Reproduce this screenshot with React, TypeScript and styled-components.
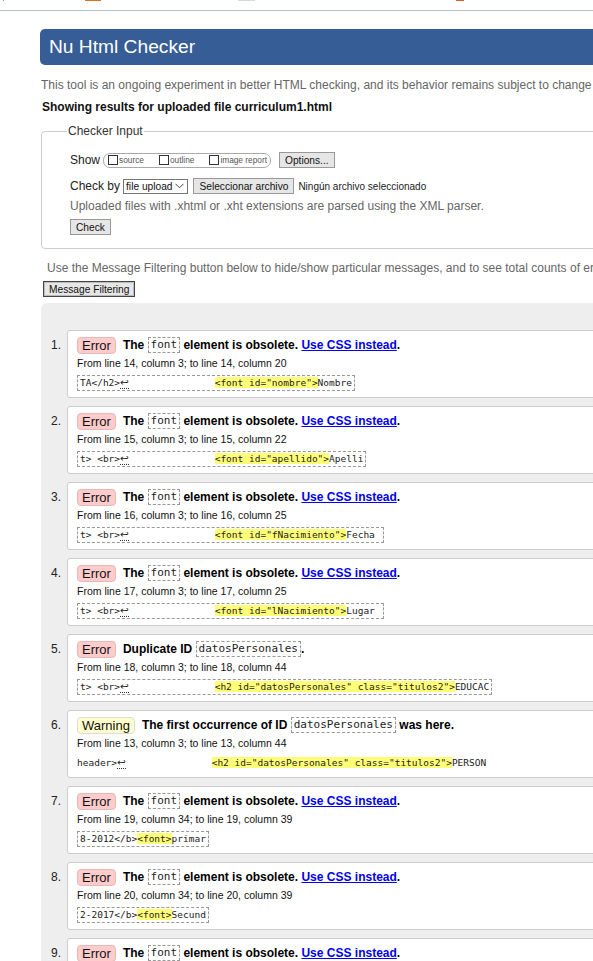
import React from "react";
import styled, { createGlobalStyle } from "styled-components";

const Global = createGlobalStyle`
  html, body { margin: 0; padding: 0; overflow: hidden; background: #fff; }
  body { font-family: "Liberation Sans", Arial, sans-serif; color: #000; }
`;

const Page = styled.div`
  width: 900px;
`;

const TopStrip = styled.div`
  height: 10px;
  border-bottom: 1px solid #b3c1cc;
  display: flex;
  align-items: flex-start;
`;

const StripBit = styled.span<{ $ml: number; $w: number; $c: string }>`
  display: block;
  margin-left: ${(p) => p.$ml}px;
  width: ${(p) => p.$w}px;
  height: 1px;
  background: ${(p) => p.$c};
`;

const Main = styled.div`
  padding-left: 40px;
`;

const Title = styled.h1`
  margin: 18px 0 0 0;
  height: 36px;
  line-height: 36px;
  background: #365d95;
  border-radius: 5px 0 0 5px;
  color: #fff;
  font-weight: normal;
  font-size: 19.2px;
  padding-left: 9px;
`;

const Intro = styled.p`
  margin: 13px 0 0 1px;
  font-size: 12px;
  line-height: 15px;
  color: #666;
  white-space: nowrap;
`;

const Showing = styled.p`
  margin: 7px 0 0 2px;
  font-size: 12px;
  line-height: 15px;
  font-weight: bold;
  color: #111;
`;

const Fieldset = styled.fieldset`
  margin: 9px 0 0 1px;
  border: 1px solid #ccc;
  border-radius: 4px;
  padding: 0 0 13px 28px;
`;

const Legend = styled.legend`
  font-size: 12px;
  line-height: 15px;
  color: #333;
  padding: 0 1px;
  margin-left: -3px;
`;

const Row = styled.div<{ $mt: number }>`
  display: flex;
  align-items: center;
  height: 16px;
  margin-top: ${(p) => p.$mt}px;
`;

const Label = styled.span`
  font-size: 12px;
  color: #222;
  margin-right: 3px;
`;

const Pill = styled.span`
  display: inline-flex;
  align-items: center;
  height: 13px;
  border: 1px solid #aaa;
  border-radius: 7px;
  padding: 0 3px 0 4px;
  margin-right: 8px;
`;

const Box = styled.span`
  display: inline-block;
  width: 8px;
  height: 8px;
  border: 1px solid #333;
  background: #fff;
  margin-right: 1px;
`;

const TinyLabel = styled.span<{ $mr: number }>`
  font-size: 8.3px;
  color: #555;
  margin-right: ${(p) => p.$mr}px;
`;

const Button = styled.span<{ $ml?: number; $strong?: boolean }>`
  display: inline-flex;
  align-items: center;
  box-sizing: border-box;
  height: 16px;
  padding: 0 5px;
  margin-left: ${(p) => p.$ml ?? 0}px;
  background: #e6e6e6;
  border: 1px solid ${(p) => (p.$strong ? "#444" : "#999")};
  box-shadow: ${(p) => (p.$strong ? "inset 0 0 0 1px #bbb" : "none")};
  font-size: 10.2px;
  color: #111;
  white-space: nowrap;
`;

const Select = styled.span`
  display: inline-flex;
  align-items: center;
  box-sizing: border-box;
  height: 15px;
  padding: 0 3px 0 2px;
  border: 1px solid #767676;
  background: #fff;
  font-size: 10.2px;
  color: #111;
  gap: 3px;
`;

const Hint = styled.span`
  font-size: 10px;
  color: #222;
  margin-left: 4px;
`;

const Note = styled.p<{ $ml?: number; $mt: number }>`
  margin: ${(p) => p.$mt}px 0 0 ${(p) => p.$ml ?? 0}px;
  font-size: 12px;
  line-height: 15px;
  color: #666;
  white-space: nowrap;
`;

const FilterRow = styled.div`
  margin: 5px 0 0 3px;
  display: flex;
`;

const Results = styled.div`
  margin: 6px 0 0 1px;
  background: #eee;
  border-top-left-radius: 6px;
  padding: 27px 0 40px 0;
`;

const List = styled.ol`
  list-style: none;
  margin: 0;
  padding: 0;
  display: flex;
  flex-direction: column;
  gap: 8px;
`;

const Entry = styled.li`
  display: flex;
`;

const Num = styled.span`
  width: 26px;
  box-sizing: border-box;
  padding: 8px 6px 0 0;
  text-align: right;
  font-size: 12px;
  line-height: 15px;
  color: #222;
`;

const Card = styled.div`
  flex: 1;
  box-sizing: border-box;
  height: 68px;
  background: #fff;
  border: 1px solid #ccc;
  border-radius: 3px;
  padding: 6px 0 6px 9px;
`;

const MsgLine = styled.div`
  display: flex;
  align-items: center;
  height: 16px;
  font-size: 12px;
  font-weight: bold;
  white-space: pre;
`;

const Badge = styled.span<{ $kind: "error" | "warning" }>`
  display: inline-flex;
  align-items: center;
  box-sizing: border-box;
  height: 17px;
  padding: 0 4px;
  margin-right: 7px;
  border-radius: 4px;
  font-size: 13px;
  font-weight: normal;
  color: #111;
  background: ${(p) => (p.$kind === "error" ? "#fcc" : "#ffc")};
  border: 1px solid ${(p) => (p.$kind === "error" ? "#e8b8b8" : "#ddd")};
`;

const Code = styled.code`
  display: inline-block;
  font-family: "DejaVu Sans Mono", "Liberation Mono", monospace;
  font-size: 11px;
  font-weight: normal;
  line-height: 14px;
  padding: 0 2px;
  border: 1px dashed #999;
  color: #222;
`;

const Link = styled.a`
  color: #00e;
  text-decoration: underline;
`;

const From = styled.div`
  margin-top: 4px;
  font-size: 10.5px;
  line-height: 13px;
  color: #111;
`;

const Extract = styled.div<{ $boxed: boolean }>`
  display: inline-block;
  margin-top: 5px;
  box-sizing: border-box;
  height: 16px;
  padding: 0 ${(p) => (p.$boxed ? 2 : 0)}px;
  border: 1px dashed ${(p) => (p.$boxed ? "#999" : "transparent")};
  margin-left: ${(p) => (p.$boxed ? 0 : -1)}px;
  font-family: "DejaVu Sans Mono", "Liberation Mono", monospace;
  font-size: 9.5px;
  line-height: 14px;
  white-space: pre;
  color: #222;
`;

const Lf = styled.span`
  display: inline-block;
  font-family: "DejaVu Sans", sans-serif;
  font-size: 10.5px;
  line-height: 11px;
  border-bottom: 1px dotted #333;
`;

const Hl = styled.span`
  background: #ff7;
`;

type Item = {
  kind: "error" | "warning";
  msg: React.ReactNode;
  from: string;
  pre: string;
  lf: boolean;
  hl: string;
  post: string;
  boxed: boolean;
};

const gap = " ".repeat(15);

const obsolete = (
  <>
    The <Code>font</Code> element is obsolete. <Link href="#">Use CSS instead</Link>.
  </>
);

const items: Item[] = [
  { kind: "error", msg: obsolete, from: "From line 14, column 3; to line 14, column 20", pre: "TA</h2>", lf: true, hl: '<font id="nombre">', post: "Nombre", boxed: true },
  { kind: "error", msg: obsolete, from: "From line 15, column 3; to line 15, column 22", pre: "t> <br>", lf: true, hl: '<font id="apellido">', post: "Apelli", boxed: true },
  { kind: "error", msg: obsolete, from: "From line 16, column 3; to line 16, column 25", pre: "t> <br>", lf: true, hl: '<font id="fNacimiento">', post: "Fecha ", boxed: true },
  { kind: "error", msg: obsolete, from: "From line 17, column 3; to line 17, column 25", pre: "t> <br>", lf: true, hl: '<font id="lNacimiento">', post: "Lugar ", boxed: true },
  {
    kind: "error",
    msg: (
      <>
        Duplicate ID <Code>datosPersonales</Code>.
      </>
    ),
    from: "From line 18, column 3; to line 18, column 44",
    pre: "t> <br>",
    lf: true,
    hl: '<h2 id="datosPersonales" class="titulos2">',
    post: "EDUCAC",
    boxed: true,
  },
  {
    kind: "warning",
    msg: (
      <>
        The first occurrence of ID <Code>datosPersonales</Code> was here.
      </>
    ),
    from: "From line 13, column 3; to line 13, column 44",
    pre: "header>",
    lf: true,
    hl: '<h2 id="datosPersonales" class="titulos2">',
    post: "PERSON",
    boxed: false,
  },
  { kind: "error", msg: obsolete, from: "From line 19, column 34; to line 19, column 39", pre: "8-2012</b>", lf: false, hl: "<font>", post: "primar", boxed: true },
  { kind: "error", msg: obsolete, from: "From line 20, column 34; to line 20, column 39", pre: "2-2017</b>", lf: false, hl: "<font>", post: "Secund", boxed: true },
  { kind: "error", msg: obsolete, from: "From line 21, column 34; to line 21, column 39", pre: "1-2020</b>", lf: false, hl: "<font>", post: "Grado ", boxed: true },
];

export default function App() {
  return (
    <Page>
      <Global />
      <TopStrip>
        <StripBit $ml={3} $w={1} $c="#999" />
        <StripBit $ml={81} $w={16} $c="#e0701f" />
        <StripBit $ml={137} $w={17} $c="#d8d8d8" />
        <StripBit $ml={201} $w={8} $c="#e05a28" />
      </TopStrip>
      <Main>
        <Title>Nu Html Checker</Title>
        <Intro>
          This tool is an ongoing experiment in better HTML checking, and its behavior remains subject to change
        </Intro>
        <Showing>Showing results for uploaded file curriculum1.html</Showing>
        <Fieldset>
          <Legend>Checker Input</Legend>
          <Row $mt={13}>
            <Label>Show</Label>
            <Pill>
              <Box />
              <TinyLabel $mr={15}>source</TinyLabel>
              <Box />
              <TinyLabel $mr={15}>outline</TinyLabel>
              <Box />
              <TinyLabel $mr={0}>image report</TinyLabel>
            </Pill>
            <Button>Options...</Button>
          </Row>
          <Row $mt={10}>
            <Label>Check by</Label>
            <Select>
              file upload
              <svg width="9" height="6" viewBox="0 0 9 6" aria-hidden>
                <path d="M0.5 0.8 L4.5 4.8 L8.5 0.8" fill="none" stroke="#444" strokeWidth="1" />
              </svg>
            </Select>
            <Button $ml={5}>Seleccionar archivo</Button>
            <Hint>Ningún archivo seleccionado</Hint>
          </Row>
          <Note $mt={5}>Uploaded files with .xhtml or .xht extensions are parsed using the XML parser.</Note>
          <Row $mt={5}>
            <Button>Check</Button>
          </Row>
        </Fieldset>
        <Note $mt={12} $ml={7}>
          Use the Message Filtering button below to hide/show particular messages, and to see total counts of errors and warnings.
        </Note>
        <FilterRow>
          <Button $strong>Message Filtering</Button>
        </FilterRow>
        <Results>
          <List>
            {items.map((it, i) => (
              <Entry key={i}>
                <Num>{i + 1}.</Num>
                <Card>
                  <MsgLine>
                    <Badge $kind={it.kind}>{it.kind === "error" ? "Error" : "Warning"}</Badge>
                    {it.msg}
                  </MsgLine>
                  <From>{it.from}</From>
                  <div>
                    <Extract $boxed={it.boxed}>
                      {it.pre}
                      {it.lf && <Lf>↩</Lf>}
                      {it.lf && gap}
                      <Hl>{it.hl}</Hl>
                      {it.post}
                    </Extract>
                  </div>
                </Card>
              </Entry>
            ))}
          </List>
        </Results>
      </Main>
    </Page>
  );
}
